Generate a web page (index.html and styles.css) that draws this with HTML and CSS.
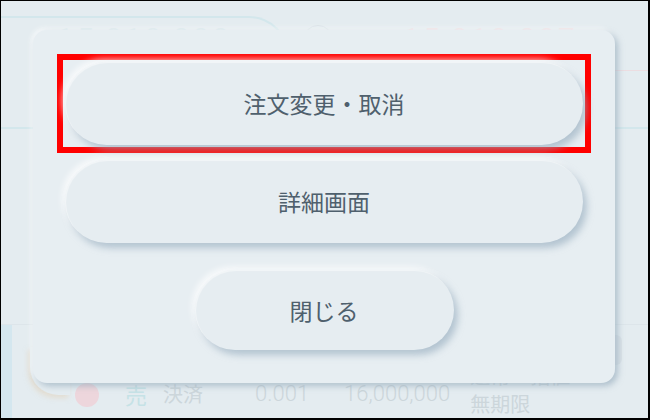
FILE: index.html
```html
<!DOCTYPE html>
<html lang="ja">
<head>
<meta charset="utf-8">
<title>注文メニュー</title>
<link rel="stylesheet" href="styles.css">
</head>
<body>
<div class="frame">
  <div class="page">
    <div class="top-row">
      <div class="quote-box"><span class="num num-blue">15,010,000</span></div>
      <div class="dot-ring"></div>
      <div class="quote-right"><span class="num num-pink">15,010,007</span></div>
    </div>
    <div class="mid-row"></div>
    <div class="spacer"></div>
    <div class="order-row">
      <div class="side-bar"></div>
      <div class="pill-beige"></div>
      <div class="circle-pink"></div>
      <span class="cell sell">売</span>
      <span class="cell kind">決済</span>
      <span class="cell qty">0.001</span>
      <span class="cell price">16,000,000</span>
      <span class="cell cond">通常・指値<br>無期限</span>
      <div class="edit-tab"></div>
    </div>
  </div>

  <div class="modal">
    <div class="highlight">
      <button class="neu-btn wide">注文変更・取消</button>
    </div>
    <button class="neu-btn wide second">詳細画面</button>
    <button class="neu-btn narrow">閉じる</button>
  </div>
</div>
</body>
</html>
```

FILE: styles.css
```css
html, body {
  margin: 0;
  padding: 0;
}

body {
  width: 650px;
  height: 420px;
  overflow: hidden;
  font-family: "Noto Sans CJK JP", "Noto Sans", sans-serif;
}

.frame {
  position: relative;
  box-sizing: border-box;
  width: 650px;
  height: 420px;
  border-style: solid;
  border-color: #000;
  border-width: 1px 2px 2px 1px;
  background: #e4ecf0;
  overflow: hidden;
}

/* faint underlying page */
.page {
  display: flex;
  flex-direction: column;
  height: 100%;
}

.top-row {
  display: flex;
  align-items: flex-start;
  height: 70px;
}

.quote-box {
  box-sizing: border-box;
  width: 298px;
  height: 70px;
  margin-top: 15px;
  margin-left: -10px;
  padding-left: 66px;
  padding-top: 6px;
  border-top: 2px solid #d3e7ec;
  border-right: 2px solid #d3e7ec;
  border-radius: 0 40px 0 0;
}

.num {
  font-family: "Roboto", "Liberation Sans", sans-serif;
  font-weight: 300;
  font-size: 30px;
  letter-spacing: 3px;
  line-height: 30px;
}

.num-blue { color: #d3e4ea; }
.num-pink { color: #f0dde1; }

.dot-ring {
  width: 28px;
  height: 28px;
  margin-top: 24px;
  margin-left: 14px;
  border-radius: 50%;
  border: 1px solid #d9e2e7;
}

.quote-right {
  flex: 1;
  align-self: stretch;
  margin-left: 70px;
  padding-top: 23px;
  border-bottom: 1px solid #ecdde1;
}

.mid-row {
  height: 56px;
  border-bottom: 2px solid #d3e7ec;
}

.spacer {
  flex: 1;
}

.order-row {
  display: flex;
  align-items: flex-end;
  height: 93px;
  border-top: 1px solid #dde5ea;
}

.side-bar {
  align-self: stretch;
  width: 11px;
  background: #d4e7ef;
}

.pill-beige {
  align-self: flex-start;
  width: 40px;
  height: 48px;
  margin-left: 18px;
  margin-top: 22px;
  border-radius: 0 0 0 28px;
  box-shadow: -2px 3px 5px rgba(225, 210, 185, 0.55);
}

.circle-pink {
  width: 24px;
  height: 24px;
  border-radius: 50%;
  background: #edd6dc;
  margin-left: 5px;
  margin-bottom: 11px;
}

.cell {
  font-size: 20px;
  line-height: 22px;
  margin-bottom: 13px;
  color: #ccd6db;
  white-space: nowrap;
}

.sell { color: #c6e2e6; margin-left: 26px; font-size: 22px; }
.kind { margin-left: 16px; }
.qty { margin-left: 52px; font-family: "Roboto", sans-serif; font-weight: 300; font-size: 22px; }
.price { margin-left: 35px; font-family: "Roboto", sans-serif; font-weight: 300; font-size: 22px; }
.cond { margin-left: 20px; margin-bottom: 0; line-height: 28px; }

.edit-tab {
  align-self: flex-start;
  width: 34px;
  height: 30px;
  margin-left: auto;
  margin-right: 26px;
  margin-top: 10px;
  border-radius: 6px;
  background: #dbe3e8;
}

/* modal */
.modal {
  position: absolute;
  left: 32px;
  top: 29px;
  box-sizing: border-box;
  width: 582px;
  height: 353px;
  padding: 24px 0 0;
  display: flex;
  flex-direction: column;
  align-items: center;
  background: #e7eef2;
  border-radius: 14px;
  box-shadow: 3px 3px 6px rgba(140, 164, 182, 0.6), -2px -2px 5px rgba(255, 255, 255, 0.7);
}

.highlight {
  border: 6px solid #ff0000;
  padding: 2px;
  line-height: 0;
}

.neu-btn {
  box-sizing: border-box;
  margin: 0;
  padding: 0;
  border: none;
  background: #e6edf1;
  color: #4f606d;
  font-family: "Noto Sans CJK JP", "Noto Sans", sans-serif;
  font-size: 23px;
  line-height: 1;
  border-radius: 42px;
  box-shadow: 4px 5px 7px rgba(145, 168, 186, 0.6), -3px -3px 6px rgba(255, 255, 255, 0.75), inset 1px 1px 1px rgba(255, 255, 255, 0.5);
}

.wide {
  width: 518px;
  height: 83px;
}

.second {
  margin-top: 7px;
}

.narrow {
  width: 259px;
  height: 80px;
  margin-top: 27px;
  border-radius: 40px;
}
```
